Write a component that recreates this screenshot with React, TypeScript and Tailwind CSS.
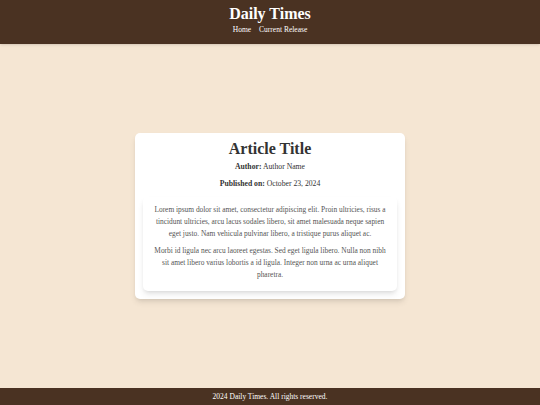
export default function App() {
  return (
    <div
      className="flex flex-col min-h-screen bg-[#f5e6d3] text-[#333]"
      style={{ fontFamily: '"Liberation Serif", "DejaVu Serif", serif' }}
    >
      {/* HEADER */}
      <header className="bg-[#4a3222] text-white text-center h-[44px] pt-[5px] shadow-sm">
        <h1 className="text-[16px] font-bold leading-[18px]">Daily Times</h1>
        <nav className="flex justify-center gap-[8px] text-[7.5px] leading-[10px] mt-[2px]">
          <a href="#">Home</a>
          <a href="#">Current Release</a>
        </nav>
      </header>

      {/* MAIN */}
      <main className="flex-1 flex items-center justify-center">
        <div className="bg-white w-[270px] rounded-[5px] shadow-md px-[8px] pt-[7px] pb-[8px] text-center">
          <h2 className="text-[16px] font-bold leading-[18px]">Article Title</h2>
          <p className="text-[7.7px] leading-[10px] mt-[4px]">
            <span className="font-bold">Author:</span> Author Name
          </p>
          <p className="text-[7.7px] leading-[10px] mt-[7px]">
            <span className="font-bold">Published on:</span> October 23, 2024
          </p>
          <div className="mt-[8px] rounded-[5px] shadow-md px-[10px] pt-[7px] pb-[10px] text-[7.4px] leading-[12px] text-[#555]">
            <p>
              Lorem ipsum dolor sit amet, consectetur adipiscing elit. Proin ultricies, risus a
              tincidunt ultricies, arcu lacus sodales libero, sit amet malesuada neque sapien eget
              justo. Nam vehicula pulvinar libero, a tristique purus aliquet ac.
            </p>
            <p className="mt-[5px]">
              Morbi id ligula nec arcu laoreet egestas. Sed eget ligula libero. Nulla non nibh sit
              amet libero varius lobortis a id ligula. Integer non urna ac urna aliquet pharetra.
            </p>
          </div>
        </div>
      </main>

      {/* FOOTER */}
      <footer className="bg-[#4a3222] text-white text-center h-[17px] text-[7.5px] leading-[17px]">
        2024 Daily Times. All rights reserved.
      </footer>
    </div>
  );
}
